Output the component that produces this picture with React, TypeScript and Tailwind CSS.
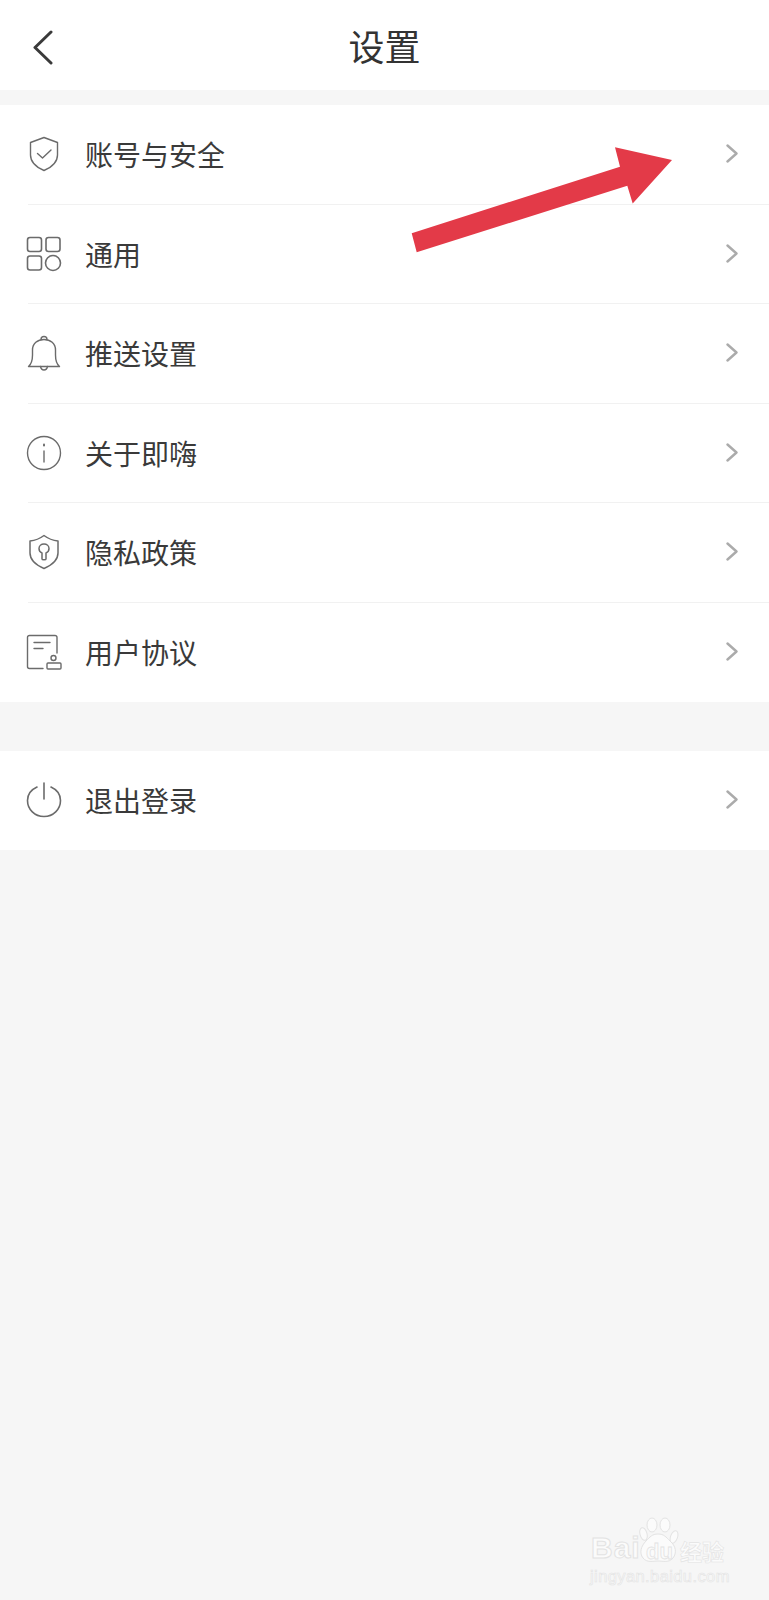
import React from "react";

const ShieldCheck = () => (
  <svg width="36" height="36" viewBox="0 0 36 36" fill="none" stroke="#6b6b6b" strokeWidth="1.4" strokeLinecap="round" strokeLinejoin="round">
    <path d="M18 1.5 L31.5 6.5 V19 C31.5 26 25 31.5 18 34.5 C11 31.5 4.5 26 4.5 19 V6.5 Z" />
    <path d="M11.5 17.5 L16.5 22 L25 14" />
  </svg>
);

const Grid = () => (
  <svg width="36" height="36" viewBox="0 0 36 36" fill="none" stroke="#6b6b6b" strokeWidth="1.6">
    <rect x="1.5" y="1.5" width="14" height="14" rx="2.5" />
    <rect x="20" y="1.5" width="14" height="14" rx="2.5" />
    <rect x="1.5" y="20" width="14" height="14" rx="2.5" />
    <circle cx="27" cy="27" r="7.5" />
  </svg>
);

const Bell = () => (
  <svg width="36" height="36" viewBox="0 0 36 36" fill="none" stroke="#6b6b6b" strokeWidth="1.4" strokeLinecap="round" strokeLinejoin="round">
    <path d="M2.5 31.5 C6 28.5 6.5 25 6.5 20 V15 C6.5 8.5 11.5 4.5 18 4.5 C24.5 4.5 29.5 8.5 29.5 15 V20 C29.5 25 30 28.5 33.5 31.5 Z" />
    <path d="M15 4.5 C15 2.5 16.5 1.5 18 1.5 C19.5 1.5 21 2.5 21 4.5" />
    <path d="M14.5 31.5 C15 34 16.5 35 18 35 C19.5 35 21 34 21.5 31.5" />
  </svg>
);

const Info = () => (
  <svg width="36" height="36" viewBox="0 0 36 36" fill="none" stroke="#6b6b6b" strokeWidth="1.4" strokeLinecap="round">
    <circle cx="18" cy="18" r="16.5" />
    <path d="M18 16 V27" />
    <path d="M18 9.5 V10.5" strokeWidth="2" />
  </svg>
);

const ShieldKey = () => (
  <svg width="36" height="36" viewBox="0 0 36 36" fill="none" stroke="#6b6b6b" strokeWidth="1.5" strokeLinecap="round" strokeLinejoin="round">
    <path d="M18 1.5 C22 4.5 27 6.5 32 7 V19 C32 26 25 31.5 18 34.5 C11 31.5 4 26 4 19 V7 C9 6.5 14 4.5 18 1.5 Z" />
    <path d="M16 19 C13.5 18 13 16 13 14.500 C13 11.800 15.200 10 18 10 C20.800 10 23 11.800 23 14.500 C23 16 22.500 18 20 19 V25 C20 26 16 26 16 25 Z" />
  </svg>
);

const Agreement = () => (
  <svg width="36" height="36" viewBox="0 0 36 36" fill="none" stroke="#6b6b6b" strokeWidth="1.4" strokeLinecap="round" strokeLinejoin="round">
    <path d="M31 19 V3.5 C31 2.3 30.2 1.5 29 1.5 H3.5 C2.3 1.5 1.5 2.3 1.5 3.5 V32.5 C1.5 33.7 2.3 34.5 3.5 34.5 H17" />
    <path d="M8 8.5 H24" />
    <path d="M8 14.5 H17" />
    <circle cx="27.5" cy="24" r="2.5" />
    <rect x="21" y="29" width="14" height="6" rx="1" />
  </svg>
);

const Power = () => (
  <svg width="36" height="36" viewBox="0 0 36 36" fill="none" stroke="#6b6b6b" strokeWidth="1.6" strokeLinecap="round">
    <path d="M11 5 C5.500 7.500 1.500 12.500 1.500 18.500 C1.500 27.500 8.800 34.500 18 34.500 C27.200 34.500 34.500 27.500 34.500 18.500 C34.500 12.500 30.500 7.500 25 5" />
    <path d="M18 1 V17" />
  </svg>
);

const Chevron = () => (
  <svg width="14" height="20" viewBox="0 0 14 20" fill="none" stroke="#ababab" strokeWidth="2.4" strokeLinecap="round" strokeLinejoin="round">
    <path d="M2.500 1.500 L11.500 9.500 L2.500 17.500" />
  </svg>
);

const Row = ({ icon, label, last }: { icon: React.ReactNode; label: string; last?: boolean }) => (
  <div className="flex h-[99.5px] flex-col">
    <div className="flex flex-1 items-center pl-[26px] pr-[30px]">
      <div className="flex w-[36px] justify-center">{icon}</div>
      <span className="ml-[23px] flex-1 text-[28px] leading-none text-[#3a3a3a]">{label}</span>
      <Chevron />
    </div>
    {!last && <div className="ml-[28px] h-px bg-[#f1f1f1]" />}
  </div>
);

const Watermark = () => (
  <div className="absolute left-[590px] top-[1517px] h-[68px] w-[140px] select-none">
    <span className="absolute left-[1px] top-[14px] text-[30px] font-bold leading-[34px] tracking-[1px] text-[#fbfbfb] [-webkit-text-stroke:1px_#e3e3e3] [font-family:'Liberation_Sans',sans-serif]">
      Bai
    </span>
    <svg className="absolute left-[49px] top-0" width="42" height="46" viewBox="0 0 42 46" fill="#fbfbfb" stroke="#e3e3e3" strokeWidth="1">
      <ellipse cx="4.500" cy="17" rx="3.500" ry="6.500" transform="rotate(-15 4.500 17)" />
      <ellipse cx="13" cy="8" rx="5" ry="7" />
      <ellipse cx="26" cy="8" rx="5" ry="7" />
      <ellipse cx="35" cy="20" rx="3.500" ry="6.500" transform="rotate(20 35 20)" />
      <path d="M19 17 C25 17 27 20 31 24 C37 29 38 36 34 41 C30 46 24 44 19 44 C14 44 8 46 4 41 C0 36 2 29 7 24 C11 20 13 17 19 17 Z" />
    </svg>
    <span className="absolute left-[56px] top-[24px] text-[22px] font-bold leading-[22px] text-[#fbfbfb] [-webkit-text-stroke:0.8px_#e3e3e3] [font-family:'Liberation_Sans',sans-serif]">
      du
    </span>
    <span className="absolute left-[90px] top-[20px] text-[22px] font-bold leading-[26px] text-[#fbfbfb] [-webkit-text-stroke:0.6px_#e3e3e3]">
      经验
    </span>
    <span className="absolute left-0 top-[50px] text-[16.500px] leading-[18px] tracking-[0.4px] text-[#fbfbfb] [-webkit-text-stroke:0.6px_#e3e3e3] [font-family:'Liberation_Sans',sans-serif]">
      jingyan.baidu.com
    </span>
  </div>
);

export default function App() {
  return (
    <div className="relative h-[1600px] w-full overflow-hidden bg-[#f6f6f6] [font-family:'Noto_Sans_CJK_SC','Noto_Sans',sans-serif]">
      <header className="relative flex h-[90px] items-center justify-center bg-white">
        <svg className="absolute left-[32px] top-[30px]" width="24" height="36" viewBox="0 0 24 36" fill="none" stroke="#3a3a3a" strokeWidth="3" strokeLinecap="round" strokeLinejoin="round">
          <path d="M19 2 L3 17.500 L19 33" />
        </svg>
        <h1 className="text-[36px] font-normal leading-none text-[#333]">设置</h1>
      </header>

      <section className="mt-[15px] bg-white">
        <Row icon={<ShieldCheck />} label="账号与安全" />
        <Row icon={<Grid />} label="通用" />
        <Row icon={<Bell />} label="推送设置" />
        <Row icon={<Info />} label="关于即嗨" />
        <Row icon={<ShieldKey />} label="隐私政策" />
        <Row icon={<Agreement />} label="用户协议" last />
      </section>

      <section className="mt-[48.500px] bg-white">
        <Row icon={<Power />} label="退出登录" last />
      </section>

      {/* red annotation arrow drawn over the list */}
      <svg className="absolute left-0 top-0" width="769" height="300" viewBox="0 0 769 300">
        <polygon points="411.700,233.300 620,166.700 615,147.300 672,160 632.700,203.500 627.300,185.700 416.700,252.300" fill="#e33a48" />
      </svg>

      <Watermark />
    </div>
  );
}
